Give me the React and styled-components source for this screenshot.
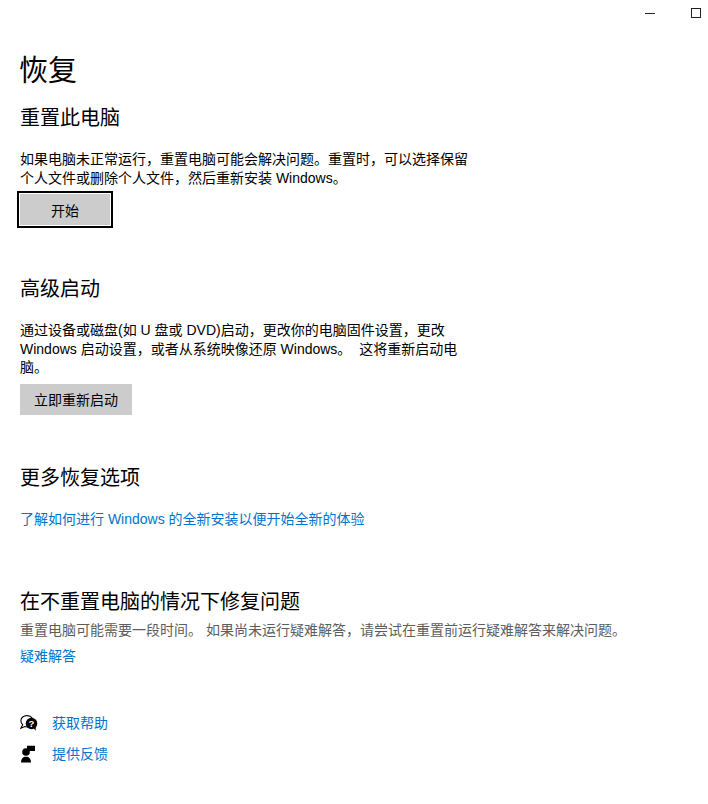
import React from 'react';
import styled, { createGlobalStyle } from 'styled-components';

const GlobalStyle = createGlobalStyle`
  html, body {
    margin: 0;
    padding: 0;
    background: #fff;
  }
  body {
    font-family: "Liberation Sans", "Noto Sans CJK SC", sans-serif;
    color: #000;
  }
`;

const Page = styled.div`
  width: 708px;
  height: 804px;
  overflow: hidden;
`;

const TitleBar = styled.div`
  height: 32px;
  display: flex;
  justify-content: flex-end;
  align-items: center;
  padding-right: 7px;
  gap: 36px;
`;

const WinButton = styled.div`
  width: 10px;
  height: 10px;
  display: flex;
  align-items: center;
  justify-content: center;
  margin-top: -6px;
`;

const Content = styled.main`
  padding: 0 20px;
`;

const PageTitle = styled.h1`
  margin: 19px 0 0 -1px;
  font-size: 29px;
  line-height: 40px;
  font-weight: 400;
`;

const Section = styled.section`
  margin-top: ${(p) => p.$top}px;
`;

const Heading = styled.h2`
  margin: 0;
  font-size: 20px;
  line-height: 28px;
  font-weight: 400;
`;

const Body = styled.p`
  margin: ${(p) => p.$top ?? 18}px 0 0;
  width: ${(p) => p.$width ?? 450}px;
  font-size: 14px;
  line-height: 18.5px;
  white-space: pre-wrap;
  color: ${(p) => p.$muted ? '#5d5d5d' : '#000'};
`;

const Button = styled.button`
  display: block;
  box-sizing: border-box;
  margin-top: ${(p) => p.$top}px;
  height: ${(p) => p.$focused ? 37 : 31}px;
  width: ${(p) => p.$w}px;
  margin-left: ${(p) => p.$focused ? -3 : 0}px;
  padding: 0;
  border: ${(p) => p.$focused ? '2px solid #000' : 'none'};
  outline: ${(p) => p.$focused ? '1px solid #fff' : 'none'};
  outline-offset: -3px;
  background: #cccccc;
  color: #000;
  font: inherit;
  font-size: 14px;
`;

const TextLink = styled.a`
  display: block;
  margin-top: ${(p) => p.$top}px;
  font-size: 14px;
  line-height: 20px;
  color: #0074cc;
  text-decoration: none;
`;

const HelpList = styled.div`
  margin-top: 46px;
  display: flex;
  flex-direction: column;
  gap: 10px;
`;

const HelpRow = styled.div`
  display: flex;
  align-items: center;
  gap: 12px;
  height: 21px;
`;

const IconSlot = styled.span`
  width: 20px;
  height: 20px;
  display: flex;
`;

const HelpIcon = () => (
  <svg width="20" height="20" viewBox="0 0 20 20">
    <path d="M7 2.600C3.700 2.600.9 4.700.9 7.700c0 1.700.7 3 1.800 4L.9 15.200l3.800-1.700c1 .4 2 .5 3.300.4" fill="#fff" stroke="#000" strokeWidth="1.100" />
    <path d="M7 2.600c2.300 0 4.200 1 5.200 2.500" fill="none" stroke="#000" strokeWidth="1.100" />
    <circle cx="11.500" cy="10.500" r="5.800" fill="#000" />
    <path d="M13.500 15l2.200 2.800-.1-5z" fill="#000" />
    <text x="11.500" y="13.800" fontSize="9.500" fontWeight="700" fill="#fff" textAnchor="middle" fontFamily="Liberation Sans">?</text>
  </svg>
);

const FeedbackIcon = () => (
  <svg width="20" height="20" viewBox="0 0 20 20">
    <circle cx="6" cy="8" r="3.800" fill="#000" />
    <path d="M1 18.500c0-3.800 2-5.800 5-5.800s5 2 5 5.800z" fill="#000" />
    <path d="M7 1.700h8v5.200h-5.200L7 9.200z" fill="#000" />
  </svg>
);

export default function App() {
  return (
    <Page>
      <GlobalStyle />
      <TitleBar>
        <WinButton>
          <svg width="10" height="10" viewBox="0 0 10 10"><path d="M0 5.500h10" stroke="#222" strokeWidth="1" /></svg>
        </WinButton>
        <WinButton>
          <svg width="10" height="10" viewBox="0 0 10 10"><rect x=".5" y=".5" width="9" height="9" fill="none" stroke="#222" /></svg>
        </WinButton>
      </TitleBar>
      <Content>
        <PageTitle>恢复</PageTitle>
        <Section $top={13}>
          <Heading>重置此电脑</Heading>
          <Body>如果电脑未正常运行，重置电脑可能会解决问题。重置时，可以选择保留个人文件或删除个人文件，然后重新安装 Windows。</Body>
          <Button $focused $top={4} $w={96}>开始</Button>
        </Section>
        <Section $top={47}>
          <Heading>高级启动</Heading>
          <Body>{'通过设备或磁盘(如 U 盘或 DVD)启动，更改你的电脑固件设置，更改 Windows 启动设置，或者从系统映像还原 Windows。  这将重新启动电脑。'}</Body>
          <Button $top={7} $w={112}>立即重新启动</Button>
        </Section>
        <Section $top={49}>
          <Heading>更多恢复选项</Heading>
          <TextLink $top={17}>了解如何进行 Windows 的全新安装以便开始全新的体验</TextLink>
        </Section>
        <Section $top={59}>
          <Heading>在不重置电脑的情况下修复问题</Heading>
          <Body $top={5} $width={640} $muted>重置电脑可能需要一段时间。 如果尚未运行疑难解答，请尝试在重置前运行疑难解答来解决问题。</Body>
          <TextLink $top={7}>疑难解答</TextLink>
        </Section>
        <HelpList>
          <HelpRow>
            <IconSlot><HelpIcon /></IconSlot>
            <TextLink $top={0}>获取帮助</TextLink>
          </HelpRow>
          <HelpRow>
            <IconSlot><FeedbackIcon /></IconSlot>
            <TextLink $top={0}>提供反馈</TextLink>
          </HelpRow>
        </HelpList>
      </Content>
    </Page>
  );
}
